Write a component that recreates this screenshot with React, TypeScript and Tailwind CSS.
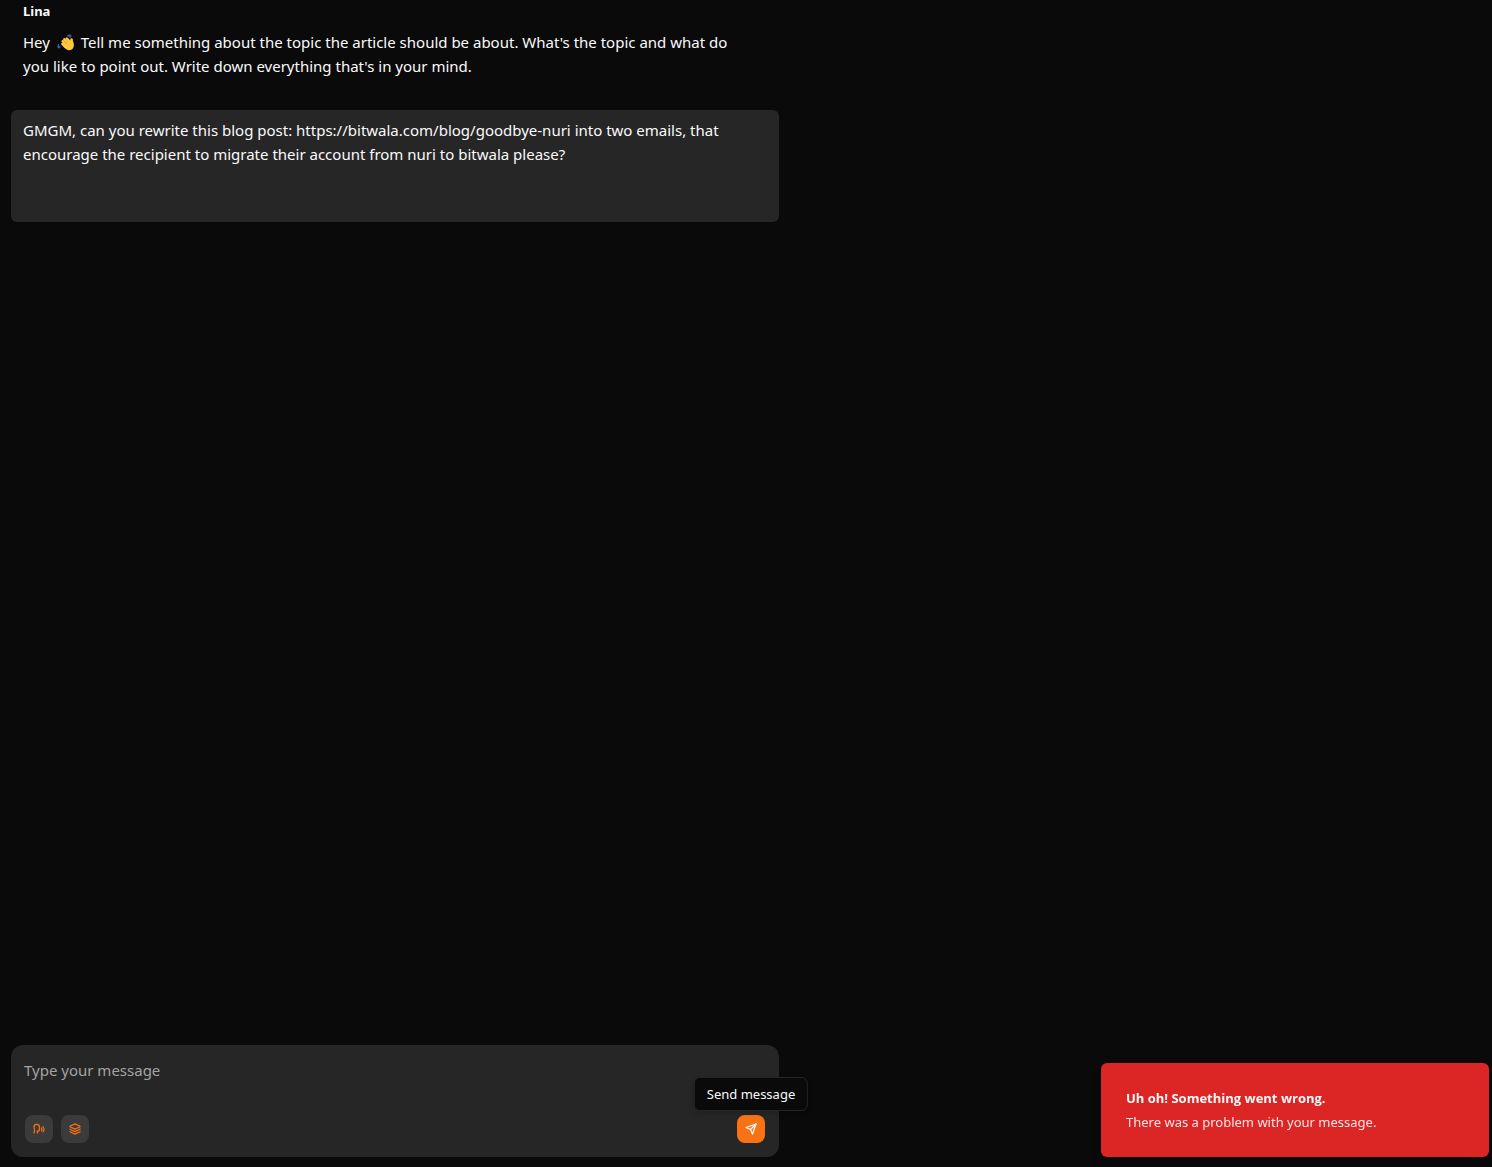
import { Layers, Speech } from "lucide-react";

function WavingHand() {
  return (
    <svg aria-hidden="true" viewBox="0 0 18 18" className="mr-0.5 ml-[3px] inline-block size-[18px] align-[-4px]">
      <path d="M10.4 1.8c1.4-.3 2.4.4 2.8 1.6M12 .9c1-.1 1.7.4 2 1.2M1.4 10.4c-.3 1.3.4 2.3 1.7 2.7M.8 12.1c0 .9.4 1.5 1.1 1.8" fill="none" stroke="#3a5f98" strokeWidth="1.3" strokeLinecap="round" />
      <g stroke="#ffc83d" strokeLinecap="round" strokeWidth="2.6">
        <path d="M5.4 9.8 8.6 13" />
        <path d="M5.7 7.2 9.4 11" />
        <path d="M7.4 5.3 11 9" />
        <path d="M9.8 4.6 13 8" />
        <path d="M14.6 5.6 14.4 9" />
      </g>
      <path d="M6.4 12.2 12.8 7.2l2.7-.8c1.5 2 1.8 5 .9 7.1-1.2 2.9-4.7 3.7-7.1 1.7Z" fill="#ffc83d" />
      <path d="M6.9 7.4 9.2 9.6M8.8 5.6 11 7.9" stroke="#d9952b" strokeWidth=".4" strokeLinecap="round" />
    </svg>
  );
}

function SendIcon() {
  return (
    <svg aria-hidden="true" viewBox="0 0 24 24" fill="none" stroke="currentColor" strokeWidth="2.5" strokeLinecap="round" strokeLinejoin="round" className="size-3">
      <path d="m22 2-7 20-4-9-9-4Z" />
      <path d="M22 2 11 13" />
    </svg>
  );
}

const toolButton = "flex size-7 items-center justify-center rounded-lg bg-[#3b3b3b] text-[#f97316]";

export default function App() {
  return (
    <div className="flex min-h-screen flex-col bg-[#0a0a0a] px-[11px] pb-2.5 font-['Noto_Sans','Open_Sans',sans-serif] text-[15px] leading-6 text-[#fafafa]">
      <main className="flex w-full max-w-3xl flex-1 flex-col">
        <article className="px-3">
          <h2 className="pb-0.5 text-[13px] leading-[22px] font-bold">Lina</h2>
          <p className="mt-1.5 pr-6">
            Hey <WavingHand /> Tell me something about the topic the article should be about. What's the topic and what do you like to point out. Write down everything that's in your mind.
          </p>
        </article>
        <article className="mt-8 min-h-28 rounded-md bg-[#262626] px-3 py-2">
          <p>
            GMGM, can you rewrite this blog post: https://bitwala.com/blog/goodbye-nuri into two emails, that encourage the recipient to migrate their account from nuri to bitwala please?
          </p>
        </article>

        <form className="mt-auto flex flex-col rounded-xl bg-[#262626] px-3.5 pt-3 pb-3.5" onSubmit={(e) => e.preventDefault()}>
          <textarea
            aria-label="Message"
            placeholder="Type your message"
            className="-ml-px h-[58px] resize-none bg-transparent leading-[26px] outline-none placeholder:text-[#a3a3a3]"
          />
          <div className="flex items-center gap-2">
            <button type="button" aria-label="Tone of voice" className={toolButton}>
              <Speech className="size-3" strokeWidth={2.5} />
            </button>
            <button type="button" aria-label="Templates" className={toolButton}>
              <Layers className="size-3" strokeWidth={2.5} />
            </button>
            <div className="relative ml-auto">
              <button type="submit" aria-label="Send message" className="flex size-7 items-center justify-center rounded-lg bg-[#f97316] text-white">
                <SendIcon />
              </button>
              <div role="tooltip" className="absolute bottom-full left-1/2 mb-1 -translate-x-1/2 rounded-md border border-[#262626] bg-[#0a0a0a] px-3 py-1.5 text-[13px] leading-5 whitespace-nowrap shadow-md">
                Send message
              </div>
            </div>
          </div>
        </form>
      </main>

      <div role="alert" className="fixed right-[3px] bottom-2.5 w-[388px] rounded-md bg-[#dc2626] px-[25px] py-[25px] text-[13px] leading-5 shadow-lg">
        <p className="font-['Open_Sans',sans-serif] font-bold">Uh oh! Something went wrong.</p>
        <p className="mt-1 opacity-90">There was a problem with your message.</p>
      </div>
    </div>
  );
}
